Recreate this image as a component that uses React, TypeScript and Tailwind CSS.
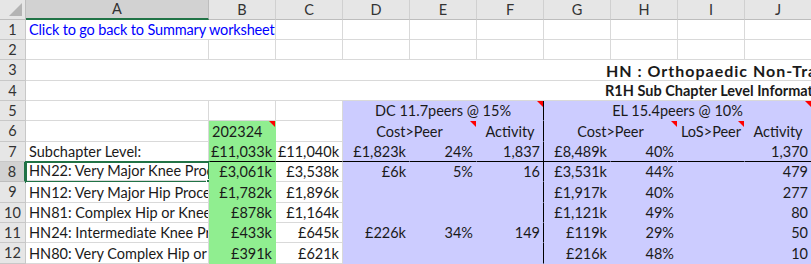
type Cell = {
  t?: string;
  span?: number;
  al?: "l" | "r" | "c";
  bg?: "g" | "p";
  bold?: boolean;
  link?: boolean;
  tri?: boolean;
  rb?: boolean; // zwarte rechterrand
  sel?: boolean;
  extra?: string;
};

const cols = ["A", "B", "C", "D", "E", "F", "G", "H", "I", "J"];

const g = (t?: string, x: Partial<Cell> = {}): Cell => ({ t, al: "r", bg: "g", ...x });
const p = (t?: string, x: Partial<Cell> = {}): Cell => ({ t, al: "r", bg: "p", ...x });
const w = (t?: string, x: Partial<Cell> = {}): Cell => ({ t, al: "r", ...x });

// rijen 1..12, kolommen A..J
const rows: Cell[][] = [
  [{ t: "Click to go back to Summary worksheet", span: 2, link: true, al: "l", extra: "tracking-[-0.15px]" }, w(), w(), w(), w(), w(), w(), w(), w()],
  [w(), w(), w(), w(), w(), w(), w(), w(), w(), w()],
  [{ t: "HN : Orthopaedic Non-Trauma", span: 10, bold: true, al: "l", extra: "pl-[580px] tracking-[1px] text-[16px]" }],
  [{ t: "R1H Sub Chapter Level Information", span: 10, bold: true, al: "l", extra: "pl-[579px]" }],
  [w(), w(), w(), p("DC 11.7peers @ 15%", { span: 3, al: "c", tri: true, rb: true }), p("EL 15.4peers @ 10%", { span: 4, al: "c", tri: true })],
  [w(), g("202324", { al: "l", tri: true }), w(), p("Cost>Peer", { span: 2, al: "c", tri: true }), p("Activity", { al: "c", rb: true }), p("Cost>Peer", { span: 2, al: "c", tri: true }), p("LoS>Peer", { al: "c", tri: true }), p("Activity", { al: "c" })],
  [w("Subchapter Level:", { al: "l" }), g("£11,033k"), w("£11,040k"), p("£1,823k"), p("24%"), p("1,837", { rb: true }), p("£8,489k"), p("40%"), p(), p("1,370")],
  [w("HN22: Very Major Knee Procedures", { al: "l", sel: true }), g("£3,061k"), w("£3,538k"), p("£6k"), p("5%"), p("16", { rb: true }), p("£3,531k"), p("44%"), p(), p("479")],
  [w("HN12: Very Major Hip Procedures", { al: "l" }), g("£1,782k"), w("£1,896k"), p(), p(), p(undefined, { rb: true }), p("£1,917k"), p("40%"), p(), p("277")],
  [w("HN81: Complex Hip or Knee Procedures", { al: "l" }), g("£878k"), w("£1,164k"), p(), p(), p(undefined, { rb: true }), p("£1,121k"), p("49%"), p(), p("80")],
  [w("HN24: Intermediate Knee Procedures", { al: "l" }), g("£433k"), w("£645k"), p("£226k"), p("34%"), p("149", { rb: true }), p("£119k"), p("29%"), p(), p("50")],
  [w("HN80: Very Complex Hip or Knee Procedures", { al: "l" }), g("£391k"), w("£621k"), p(), p(), p(undefined, { rb: true }), p("£216k"), p("48%"), p(), p("10")],
];

function SheetCell({ c, row }: { c: Cell; row: number }) {
  const bgCls = c.bg === "g" ? "bg-[#90ee90]" : c.bg === "p" ? "bg-[#ccccff]" : "bg-white";
  let bColor = "border-[#d9d9d9]";
  if (c.bg === "g") bColor = "border-[#90ee90]";
  if (c.bg === "p") bColor = "border-[#ccccff]";
  const rColor = c.rb ? "border-r-black" : "";
  const bottom = row === 7 ? "border-b-black" : "";
  const noLines = row === 3 || row === 4 ? "border-r-transparent" : "";
  const just = c.al === "r" ? "justify-end" : c.al === "c" ? "justify-center" : "justify-start";
  const spanCls =
    c.span === 2 ? "col-span-2" : c.span === 3 ? "col-span-3" : c.span === 4 ? "col-span-4" : c.span === 10 ? "col-span-10" : "";
  return (
    <div
      className={`relative flex items-end overflow-hidden whitespace-nowrap border-r border-b px-[3px] pb-[1px] leading-[17px] ${bgCls} ${bColor} ${rColor} ${bottom} ${noLines} ${just} ${spanCls} ${c.extra ?? ""} ${c.bold ? "font-bold" : ""} ${c.link ? "text-[#0000ff]" : "text-[#1a1a1a]"}`}
    >
      {c.t}
      {c.tri && (
        <span className="absolute right-0 top-0 h-0 w-0 border-l-[6px] border-t-[6px] border-l-transparent border-t-[#ff0000]" />
      )}
    </div>
  );
}

export default function App() {
  return (
    <div className="h-[264px] w-[811px] overflow-hidden bg-white font-['Lato',sans-serif] text-[14.5px]">
      <div className="grid w-[812px] grid-cols-[26px_183px_repeat(9,67px)] grid-rows-[20px_20px_20px_21px_20px_20px_21px_20px_20px_21px_20px_20px_21px]">
        {/* hoekje */}
        <div className="relative border-r border-b border-[#bdbdbd] bg-[#e6e6e6]">
          <span className="absolute bottom-[3px] right-[3px] h-0 w-0 border-b-[13px] border-l-[13px] border-b-[#b4b4b4] border-l-transparent" />
        </div>
        {cols.map((c, i) => (
          <div
            key={c}
            className={`flex items-center justify-center border-r text-[#333] ${
              i === 0 ? "border-b-2 border-b-[#217346] bg-[#d2d2d2] border-r-[#bdbdbd]" : "border-b border-b-[#bdbdbd] bg-[#e6e6e6] border-r-[#d0d0d0]"
            }`}
          >
            {c}
          </div>
        ))}

        {rows.map((r, ri) => {
          const n = ri + 1;
          return [
            <div
              key={`h${n}`}
              className={`flex items-center justify-center border-b border-r text-[#333] ${
                n === 8 ? "bg-[#d2d2d2] border-r-2 border-r-[#217346] border-b-[#bdbdbd]" : "bg-[#e6e6e6] border-[#c8c8c8]"
              }`}
            >
              {n}
            </div>,
            ...r.map((c, ci) =>
              c.sel ? (
                <div key={`${n}-${ci}`} className="relative">
                  <SheetCell c={c} row={n} />
                  <span className="pointer-events-none absolute inset-[-1px] border-2 border-[#217346]" />
                  <span className="absolute bottom-[-3px] right-[-3px] h-[6px] w-[6px] border border-white bg-[#217346]" />
                </div>
              ) : (
                <SheetCell key={`${n}-${ci}`} c={c} row={n} />
              )
            ),
          ];
        })}
      </div>
    </div>
  );
}
